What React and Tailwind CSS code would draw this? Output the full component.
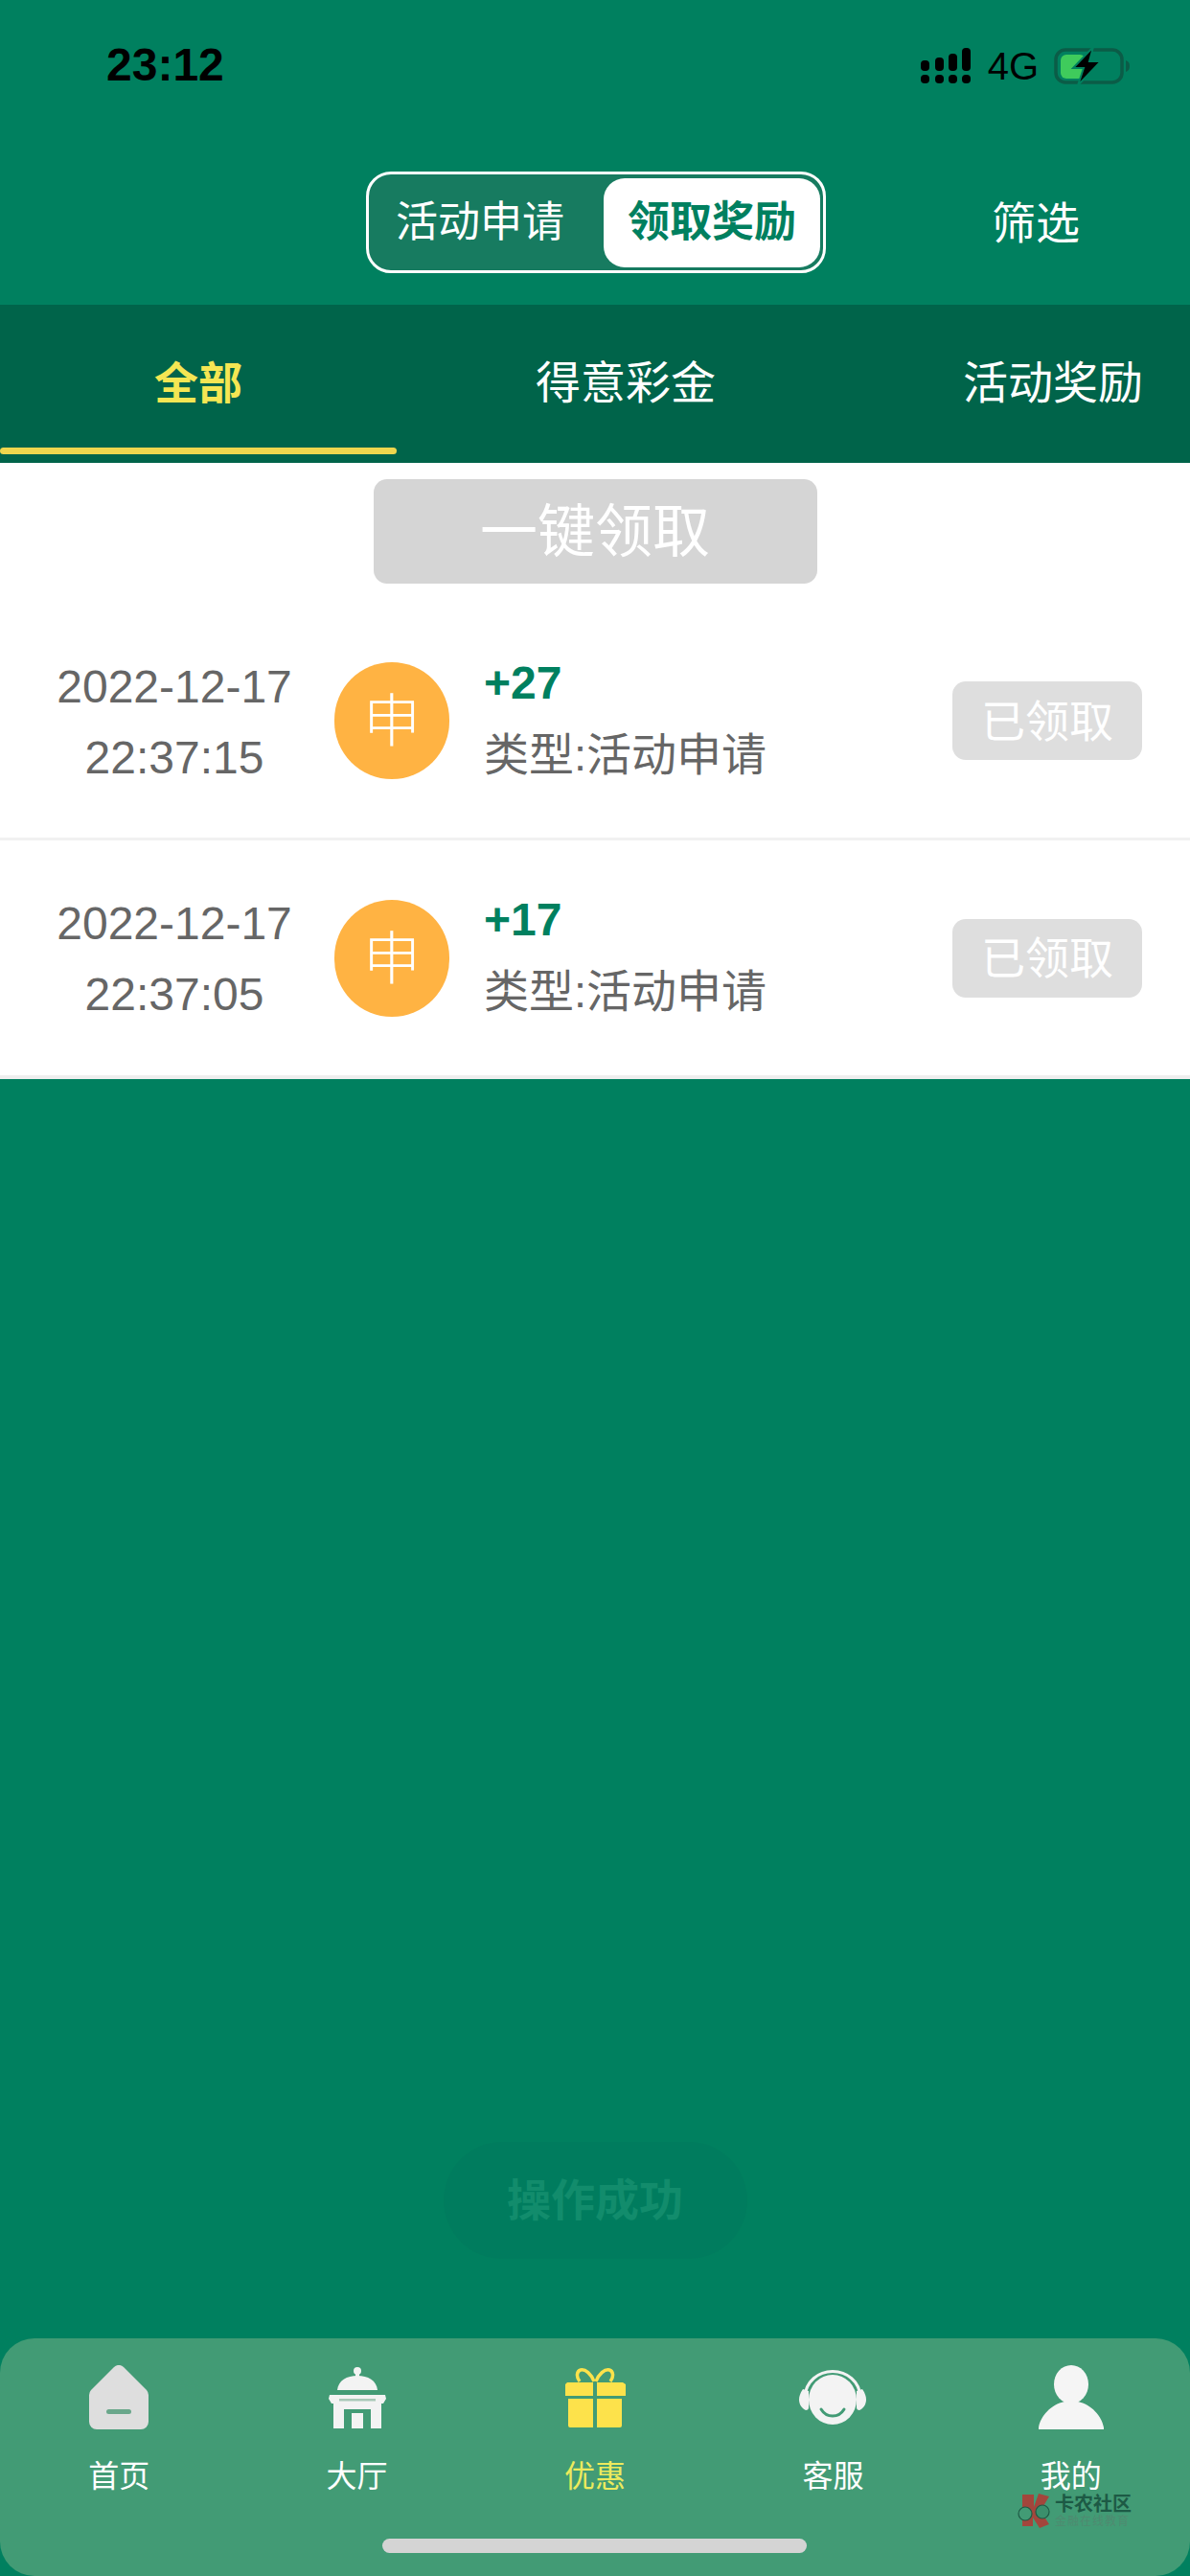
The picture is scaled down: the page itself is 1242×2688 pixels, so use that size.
import React from 'react';

const FONT = "font-['Liberation_Sans','Noto_Sans_CJK_SC',sans-serif]";

const records = [
  { date: '2022-12-17', time: '22:37:15', amount: '+27' },
  { date: '2022-12-17', time: '22:37:05', amount: '+17' },
];

function StatusIcons() {
  return (
    <div className="flex items-center">
      {/* signal dots */}
      <svg width="52" height="38" viewBox="0 0 52 38" className="mr-[18px]">
        <g fill="#000">
          <rect x="0" y="13" width="9" height="11" rx="4" />
          <rect x="15" y="10" width="9" height="14" rx="4" />
          <rect x="29" y="6" width="9" height="18" rx="4" />
          <rect x="43" y="0" width="9" height="24" rx="4" />
          <rect x="0" y="28" width="9" height="9" rx="4" />
          <rect x="15" y="28" width="9" height="9" rx="4" />
          <rect x="29" y="28" width="9" height="9" rx="4" />
          <rect x="43" y="28" width="9" height="9" rx="4" />
        </g>
      </svg>
      <span className="text-[40px] leading-none text-black mr-[16px]">4G</span>
      {/* charging battery */}
      <svg width="80" height="40" viewBox="0 0 80 40">
        <rect x="2" y="3" width="69" height="34" rx="10" fill="none" stroke="#0b5c47" strokeWidth="3.5" />
        <path d="M75 14c3 1 4 3 4 6s-1 5-4 6z" fill="#0b5c47" />
        <rect x="7" y="8" width="26" height="25" rx="6" fill="#3fcb5c" />
        <path d="M41 0L20 22h11l-6 18 24-25H37z" fill="#000" stroke="#00805f" strokeWidth="2" />
      </svg>
    </div>
  );
}

function HomeIcon() {
  return (
    <svg width="64" height="67" viewBox="0 0 64 67">
      <path d="M27 2a7 7 0 0 1 10 0l24 24a8 8 0 0 1 2 6v27a8 8 0 0 1-8 8H9a8 8 0 0 1-8-8V32a8 8 0 0 1 2-6z" fill="#dedede" />
      <rect x="19" y="46" width="26" height="5" rx="2.5" fill="#6aa78b" />
    </svg>
  );
}

function HallIcon() {
  return (
    <svg width="60" height="64" viewBox="0 0 60 64">
      <g fill="#f3f3f3">
        <circle cx="30" cy="4" r="4" />
        <rect x="28" y="4" width="4" height="6" />
        <path d="M9 24C10 14 19 9 30 9s20 5 21 15z" />
        <path d="M1 29h58l1 4-3 5H3l-3-5z" />
        <path d="M5 38h50v26H44V44H16v20H5z" />
        <rect x="24" y="48" width="12" height="16" />
      </g>
      <rect x="11" y="33" width="38" height="2.5" fill="#a9c9b8" />
    </svg>
  );
}

function GiftIcon() {
  return (
    <svg width="64" height="62" viewBox="0 0 64 62">
      <path d="M31 14C28 6 22 1 17 2c-4 1-5 7-1 12M33 14c3-8 9-13 14-12 4 1 5 7 1 12" fill="none" stroke="#fde24b" strokeWidth="3.5" />
      <path d="M3 15h27v14H1V17zM34 15h27l3 2v12H34z" fill="#fde24b" />
      <path d="M4 32h26v30H6a2 2 0 0 1-2-2zM34 32h26v28a2 2 0 0 1-2 2H34z" fill="#fde24b" />
    </svg>
  );
}

function ServiceIcon() {
  return (
    <svg width="70" height="58" viewBox="0 0 70 58">
      <path d="M6 28C7 12 20 1.500 35 1.500S63 12 64 28" fill="none" stroke="#f3f3f3" strokeWidth="3" />
      <ellipse cx="35" cy="31" rx="25" ry="26" fill="#f3f3f3" />
      <path d="M4 20c-3 4-4 8-4 11 0 5 3 9 7 11 2 0 3-1 3-3V22z" fill="#f3f3f3" />
      <path d="M66 20c3 4 4 8 4 11 0 5-3 9-7 11-2 0-3-1-3-3V22z" fill="#f3f3f3" />
      <path d="M23 41c3 5 8 7 12 7s9-2 12-7" fill="none" stroke="#429b75" strokeWidth="3" strokeLinecap="round" />
    </svg>
  );
}

function UserIcon() {
  return (
    <svg width="68" height="67" viewBox="0 0 68 67">
      <ellipse cx="34" cy="20" rx="18" ry="20" fill="#f5f5f5" />
      <path d="M27 35h14v3c14 3 25 15 27 27v2H0v-2c2-12 13-24 27-27z" fill="#f5f5f5" />
    </svg>
  );
}

function NavItem({ icon, label, active }) {
  return (
    <div className="flex flex-col items-center">
      <div className="h-[67px] flex items-center justify-center">{icon}</div>
      <span className={`mt-[27px] text-[32px] leading-[44px] ${active ? 'text-[#ecea5c]' : 'text-white'}`}>{label}</span>
    </div>
  );
}

function Watermark() {
  return (
    <div className="absolute left-[1062px] top-[162px] flex items-center">
      <svg width="38" height="36" viewBox="0 0 38 36">
        <path d="M5 1h12v13L22 0l11 3-9 15 9 14-10 4-7-11v9H5z" fill="#a3463c" />
        <circle cx="8" cy="21" r="7" fill="#429b75" stroke="#1f5a45" strokeWidth="1.2" />
        <circle cx="26" cy="19" r="7" fill="#3b8f6c" stroke="#1f5a45" strokeWidth="1.2" />
      </svg>
      <div className="ml-[1px] flex flex-col">
        <span className="text-[20px] leading-[22px] font-bold text-[#1d5a45] whitespace-nowrap">卡农社区</span>
        <span className="text-[12px] leading-[14px] text-[#4f8a70] whitespace-nowrap tracking-[1px]">金融在线教育</span>
      </div>
    </div>
  );
}

function RecordRow({ item, last }) {
  return (
    <div className={`flex items-center ${last ? 'h-[245px]' : 'h-[247px] border-b-[3px] border-[#f1f1f1]'}`}>
      <div className="ml-[57px] w-[250px] pt-[3px] whitespace-nowrap text-center text-[48px] leading-[74px] text-[#666]">
        <div>{item.date}</div>
        <div>{item.time}</div>
      </div>
      <div className="ml-[42px] w-[120px] h-[122px] pt-[4px] rounded-full bg-[#ffb343] flex items-center justify-center text-[60px] font-light text-white">申</div>
      <div className="ml-[36px] flex flex-col -mt-[4px]">
        <span className="text-[48px] leading-[60px] font-bold text-[#00805f]">{item.amount}</span>
        <span className="mt-[15px] text-[47px] leading-[60px] text-[#666] whitespace-nowrap">类型:活动申请</span>
      </div>
      <div className="ml-auto mr-[50px] w-[198px] h-[82px] pt-[2px] rounded-[14px] bg-[#dedede] flex items-center justify-center text-[46px] text-white">已领取</div>
    </div>
  );
}

export default function App() {
  return (
    <div className={`${FONT} w-[1242px] h-[2688px] bg-[#00805f] flex flex-col overflow-hidden`}>
      {/* status bar */}
      <div className="h-[136px] flex justify-between pl-[111px] pr-[62px] pt-[44px]">
        <span className="text-[48px] leading-[48px] font-bold text-black">23:12</span>
        <div className="mt-[5px] h-[48px]"><StatusIcons /></div>
      </div>

      {/* top nav */}
      <div className="h-[182px] pl-[382px] pt-[43px]">
        <div className="flex items-start">
          <div className="w-[480px] h-[106px] rounded-[26px] border-[3px] border-white bg-[#177b60] flex items-center p-[3px]">
            <span className="flex-1 text-center text-[44px] text-white pr-[16px]">活动申请</span>
            <span className="w-[226px] h-[93px] rounded-[22px] bg-white flex items-center justify-center text-[44px] font-semibold text-[#00805f]">领取奖励</span>
          </div>
          <span className="ml-[173px] h-[106px] pt-[2px] flex items-center text-[46px] text-white">筛选</span>
        </div>
      </div>

      {/* category tabs */}
      <div className="h-[165px] bg-[#00644a] flex gap-[32px] overflow-hidden">
        <div className="w-[414px] shrink-0 h-full relative flex items-center justify-center text-[46px] font-bold text-[#f5e653]">
          全部
          <div className="absolute left-0 right-0 bottom-[9px] h-[7px] rounded-full bg-[#eed64e]" />
        </div>
        <div className="w-[414px] shrink-0 flex items-center justify-center text-[47px] text-white">得意彩金</div>
        <div className="w-[414px] shrink-0 flex items-center justify-center text-[47px] text-white">活动奖励</div>
      </div>

      {/* claim list */}
      <div className="bg-white border-b-[4px] border-[#eeeeee]">
        <div className="pt-[17px] flex justify-center">
          <div className="w-[463px] h-[109px] pt-[2px] rounded-[14px] bg-[#d5d5d5] flex items-center justify-center text-[60px] text-white">一键领取</div>
        </div>
        <div className="mt-[21px]">
          {records.map((item, i) => (
            <RecordRow key={item.time} item={item} last={i === records.length - 1} />
          ))}
        </div>
      </div>

      {/* toast sits low in the empty area */}
      <div className="flex-1 flex justify-center pt-[1109px]">
        <div className="w-[317px] h-[122px] rounded-full bg-[#007c5e] flex items-center justify-center text-[46px] font-bold text-[#128c6c]">操作成功</div>
      </div>

      {/* bottom nav */}
      <div className="relative h-[248px] rounded-[36px] bg-[#429b75] grid grid-cols-5 pt-[28px]">
        <NavItem icon={<HomeIcon />} label="首页" />
        <NavItem icon={<HallIcon />} label="大厅" />
        <NavItem icon={<GiftIcon />} label="优惠" active />
        <NavItem icon={<ServiceIcon />} label="客服" />
        <NavItem icon={<UserIcon />} label="我的" />
        <Watermark />
        <div className="absolute left-[399px] top-[209px] w-[443px] h-[15px] rounded-full bg-[#d4d4d4]" />
      </div>
    </div>
  );
}
